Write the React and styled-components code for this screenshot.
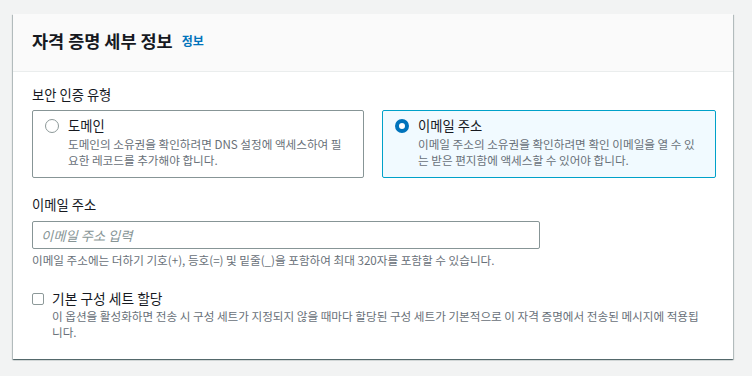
import styled, { createGlobalStyle } from "styled-components";
import { useState } from "react";

const options = [
    {
        id: "domain",
        title: "도메인",
        text: "도메인의 소유권을 확인하려면 DNS 설정에 액세스하여 필요한 레코드를 추가해야 합니다.",
    },
    {
        id: "email",
        title: "이메일 주소",
        text: "이메일 주소의 소유권을 확인하려면 확인 이메일을 열 수 있는 받은 편지함에 액세스할 수 있어야 합니다.",
    },
];

const App = () => {
    const [selected, setSelected] = useState("email"); // chosen verification type
    const [email, setEmail] = useState("");
    const [useDefault, setUseDefault] = useState(false);

    return (
        <Page>
            <GlobalStyle />
            <Card>
                <Header>
                    <Title>자격 증명 세부 정보</Title>
                    <InfoLink href="#">정보</InfoLink>
                </Header>
                <Body>
                    <FieldLabel>보안 인증 유형</FieldLabel>
                    <Tiles>
                        {options.map((option) => {
                            const active = option.id === selected;
                            return (
                                // one tile per verification type
                                <Tile key={option.id} $active={active} onClick={() => setSelected(option.id)}>
                                    <Radio $active={active} />
                                    <TileText>
                                        <TileTitle>{option.title}</TileTitle>
                                        <Description>{option.text}</Description>
                                    </TileText>
                                </Tile>
                            );
                        })}
                    </Tiles>

                    <EmailLabel>이메일 주소</EmailLabel>
                    <Input
                        type="text"
                        placeholder="이메일 주소 입력"
                        value={email}
                        onChange={(event) => setEmail(event.target.value)}
                    />
                    <Hint>이메일 주소에는 더하기 기호(+), 등호(=) 및 밑줄(_)을 포함하여 최대 320자를 포함할 수 있습니다.</Hint>

                    <CheckRow onClick={() => setUseDefault(!useDefault)}>
                        <CheckBox $checked={useDefault} />
                        <TileText>
                            <CheckTitle>기본 구성 세트 할당</CheckTitle>
                            <Description>
                                이 옵션을 활성화하면 전송 시 구성 세트가 지정되지 않을 때마다 할당된 구성 세트가 기본적으로 이 자격 증명에서 전송된 메시지에 적용됩니다.
                            </Description>
                        </TileText>
                    </CheckRow>
                </Body>
            </Card>
        </Page>
    );
};

export default App;


const GlobalStyle = createGlobalStyle`
    body {
        margin: 0;
        background-color: #f2f3f3;
        font-family: "Noto Sans CJK KR", "Liberation Sans", sans-serif;
        color: #16191f;
    }
`;

const Page = styled.div`
    padding: 14px 19px 0 13px;
    height: 376px;
    box-sizing: border-box;
`;

const Card = styled.div`
    background-color: #ffffff;
    box-shadow: 0 1px 1px 0 rgba(0, 28, 36, 0.45), 1px 1px 1px 0 rgba(0, 28, 36, 0.2), -1px 1px 1px 0 rgba(0, 28, 36, 0.2);
`;

const Header = styled.div`
    display: flex;
    align-items: center;
    height: 58px;
    padding: 0 19px 4px;
    box-sizing: border-box;
    background-color: #fafafa;
    border-bottom: 1px solid #eaeded;
`;

const Title = styled.h2`
    margin: 0;
    font-size: 17.5px;
    font-weight: 700;
    line-height: 22px;
    color: #16191f;
`;

const InfoLink = styled.a`
    margin-left: 9px;
    font-size: 12px;
    font-weight: 700;
    color: #0073bb;
    text-decoration: none;
    line-height: 22px;
    padding-top: 1px;
`;

const Body = styled.div`
    padding: 14px 19px 19px;
    display: flex;
    flex-direction: column;
    align-items: flex-start;
`;

const FieldLabel = styled.div`
    font-size: 13.3px;
    line-height: 18px;
    margin-bottom: 6px;
`;

const Tiles = styled.div`
    display: grid;
    grid-template-columns: 332px 334px;
    gap: 18px;
    width: 100%;
`;

const Tile = styled.div`
    display: flex;
    align-items: flex-start;
    gap: 8px;
    padding: 6px 12px 9px 12px;
    border: 1px solid ${(props) => (props.$active ? "#00a1c9" : "#879596")};
    background-color: ${(props) => (props.$active ? "#f1faff" : "#ffffff")};
    border-radius: 2px;
    cursor: pointer;
`;

const Radio = styled.span`
    flex: none;
    box-sizing: border-box;
    width: 14px;
    height: 14px;
    margin: 2px 1px 0 0;
    border-radius: 50%;
    background-color: #ffffff;
    border: ${(props) => (props.$active ? "4px solid #0073bb" : "1.5px solid #8d9999")};
`;

const TileText = styled.div`
    display: flex;
    flex-direction: column;
    gap: 1px;
`;

const TileTitle = styled.div`
    font-size: 13.3px;
    line-height: 18px;
`;

const Description = styled.div`
    font-size: 11.6px;
    line-height: 16px;
    color: #687078;
`;

const EmailLabel = styled(FieldLabel)`
    margin-top: 18px;
    margin-bottom: 7px;
`;

const Input = styled.input`
    box-sizing: border-box;
    width: 508px;
    height: 28px;
    padding: 0 8px;
    border: 1px solid #879596;
    border-radius: 2px;
    font-family: inherit;
    font-size: 13.3px;
    outline: none;

    &::placeholder {
        color: #879596;
        font-style: italic;
    }
`;

const Hint = styled.div`
    margin-top: 3px;
    font-size: 11.6px;
    line-height: 16px;
    color: #687078;
`;

const CheckRow = styled.div`
    display: flex;
    align-items: flex-start;
    gap: 8px;
    margin-top: 22px;
    padding-right: 8px;
    cursor: pointer;
`;

const CheckBox = styled.span`
    flex: none;
    box-sizing: border-box;
    width: 12px;
    height: 12px;
    margin-top: 3px;
    border: 1.5px solid ${(props) => (props.$checked ? "#0073bb" : "#8d9999")};
    background-color: ${(props) => (props.$checked ? "#0073bb" : "#ffffff")};
    border-radius: 2px;
`;

const CheckTitle = styled.div`
    font-size: 13.75px;
    line-height: 17px;
`;
